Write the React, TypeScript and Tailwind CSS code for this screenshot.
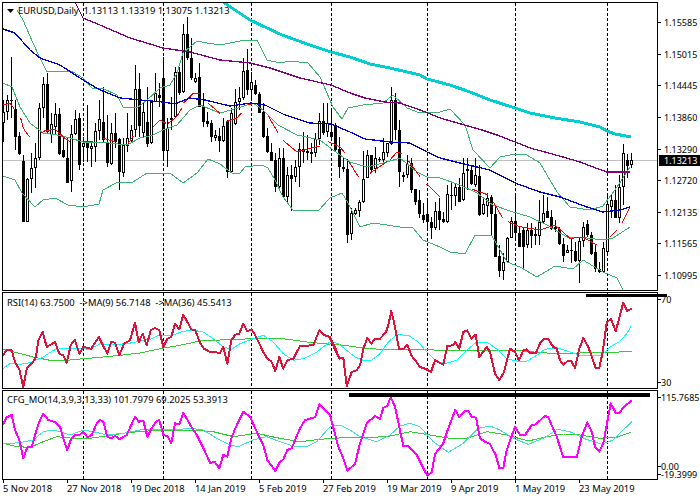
import React from "react";

type C = [number, number, number, number, number];
const conv = (y0: number, a: C[]) => a.map(([h, l, t, b, w]) => [y0 + h / 3, y0 + l / 3, y0 + t / 3, y0 + b / 3, w].map((v, i) => i < 4 ? Math.round(v) : v));
const z7: C[] = [[270,395,305,338,1],[255,330,270,305,1],[140,325,270,272,0],[270,420,298,380,0],[365,435,378,432,0],[435,637,453,635,0],[505,637,508,635,1],[430,550,475,508,1],[400,535,445,475,1],[280,450,295,445,1],[200,325,222,295,1],[190,370,222,365,0],[310,400,343,375,1],[280,375,312,350,1],[295,435,312,433,0],[380,445,420,442,0],[380,520,445,518,0],[345,545,372,512,1],[300,375,328,372,1],[310,480,323,465,0],[380,455,398,410,1],[285,455,398,415,0],[400,470,408,416,1],[340,455,363,410,1],[270,390,328,362,1],[230,395,337,390,0],[315,470,395,458,0],[340,465,370,462,1],[310,415,370,395,0],[385,540,388,485,0],[385,500,405,488,1],[310,425,385,408,1],[345,400,360,393,1],[165,380,238,360,1],[190,380,238,348,0],[275,385,305,368,1],[230,410,336,402,0],[270,402,275,400,1],[190,275,248,275,1],[220,290,255,263,0],[140,450,205,423,0],[325,472,355,423,1],[260,360,323,330,0],[170,325,187,322,1],[170,255,187,248,0],[42,250,72,245,1],[22,150,72,143,0],[85,210,143,203,0],[190,220,203,215,1],[160,285,202,290,0],[248,350,290,335,0],[305,352,333,342,0],[330,395,340,380,0],[360,392,375,385,1],[355,425,378,392,0]];
const z8: C[] = [[235,305,258,302,1],[240,415,243,395,0],[205,400,220,397,1],[148,255,185,252,1],[140,210,175,185,1],[55,180,92,175,1],[28,165,90,150,0],[95,175,126,150,1],[120,165,135,163,0],[155,220,162,218,0],[190,295,217,290,0],[265,340,288,335,0],[310,362,335,362,0],[340,455,360,440,0],[325,452,355,440,1],[323,472,355,470,0],[380,490,405,470,1],[375,512,405,417,0],[360,425,382,410,1],[310,440,328,382,1],[275,370,328,337,0],[285,360,333,340,0],[310,368,335,342,0],[280,350,297,338,1],[220,315,243,298,1],[190,285,243,278,0],[190,290,248,277,1],[210,300,275,290,0],[250,335,256,330,0],[290,415,327,382,0],[350,395,380,386,0],[358,610,387,585,0],[505,600,520,583,1],[505,525,510,523,1],[480,532,485,512,1],[332,490,418,485,1],[330,415,345,415,1],[345,400,345,390,0],[320,400,355,388,1],[350,365,358,361,0],[295,365,337,360,1],[310,350,310,340,1],[142,315,180,313,1],[160,300,180,270,0],[240,442,270,395,0],[395,425,405,412,1],[345,415,372,406,1],[355,460,370,450,0],[450,495,447,487,0],[450,535,480,523,0],[490,550,525,540,0],[480,565,522,547,0],[530,598,545,565,0],[485,570,513,565,1],[475,570,513,540,0]];
const z9: C[] = [[245,280,267,275,0],[165,280,192,275,1],[155,240,195,198,0],[160,228,172,197,1],[145,215,172,215,0],[85,212,130,210,1],[85,180,118,122,0],[105,165,120,162,0],[85,170,135,165,1],[105,258,138,255,0],[205,255,222,252,1],[190,260,203,227,1],[195,315,200,253,0],[225,380,252,380,0],[345,440,378,422,0],[370,450,397,422,1],[320,395,324,395,1],[260,325,273,325,1],[190,325,273,308,0],[290,350,308,350,0],[295,413,300,350,0],[280,355,300,345,1],[280,355,300,317,0],[290,345,313,317,0],[210,345,277,317,1],[195,280,250,277,1],[200,265,243,265,0],[240,300,260,297,0],[270,305,290,298,0],[290,345,298,343,0],[325,395,342,378,0],[345,370,360,368,1],[320,400,360,364,0],[335,395,362,392,0],[320,460,332,392,1],[275,350,290,332,1],[270,320,283,315,0],[305,375,315,372,0],[345,425,367,418,0],[395,430,418,427,0],[335,428,355,425,1],[195,368,222,367,1],[195,265,210,230,1],[165,265,210,265,0],[135,280,170,265,1],[43,225,68,170,1],[72,145,90,107,0],[70,115,90,105,1]];
const candles = [...conv(10, z7), ...conv(40, z8), ...conv(130, z9)];

const P = (x0: number, y0: number, a: number[]) => {
  let s = "";
  for (let i = 0; i < a.length; i += 2) s += `${(x0 + a[i] / 3).toFixed(1)},${(y0 + a[i + 1] / 3).toFixed(1)} `;
  return s;
};
const R = (a: number[]) => {
  let s = "";
  for (let i = 0; i < a.length; i += 2) s += `${a[i]},${a[i + 1]} `;
  return s;
};

const dashes = [83, 163, 251, 331, 427, 515, 607];
const Line = ({ p, c, w = 1 }: { p: string; c: string; w?: number }) => (
  <polyline points={p} fill="none" stroke={c} strokeWidth={w} strokeLinejoin="round" shapeRendering="crispEdges" />
);
const Dashes = ({ y1, y2 }: { y1: number; y2: number }) => (
  <>
    {dashes.map((x) => (
      <line key={x} x1={x + 0.5} x2={x + 0.5} y1={y1} y2={y2} stroke="#000" strokeDasharray="3 2" shapeRendering="crispEdges" />
    ))}
  </>
);

const upper = R([17,10,23,20,33,43,40,58,47,72,60,71,73,72,83,78,92,88,102,88,117,95,123,107,137,108,147,100,160,88,170,85,177,73,183,53,197,41,207,43,220,45,240,41,257,40,267,60,280,63,290,61,308,63,320,77,333,107,342,119,348,108,363,105,383,103,393,95,407,108,420,113,440,112,450,109,465,125,473,150,490,168,500,157,515,154,527,155,540,163,557,192,570,207,590,210,603,206,617,187,630,167]);
const mid = R([3,83,12,87,20,107,30,123,43,133,57,135,70,138,83,142,100,142,127,145,140,138,153,135,163,130,177,125,190,110,200,105,220,113,238,108,253,103,263,110,278,125,297,135,320,140,333,150,350,162,367,167,387,162,400,158,417,172,427,177,440,178,460,185,477,193,493,205,510,211,530,217,547,225,567,237,587,238,603,240,613,238,630,227]);
const lower = R([3,176,15,180,22,193,35,207,43,200,55,198,68,205,83,207,99,204,103,190,118,182,133,182,147,173,170,173,183,183,197,173,208,159,220,164,232,173,240,173,245,167,262,165,268,168,275,180,283,197,293,210,318,211,330,198,342,193,348,203,360,227,373,223,400,227,413,228,423,240,440,247,450,252,465,254,475,235,492,236,507,262,520,267,537,277,555,266,573,269,583,260,603,272,617,278,623,290]);
const purple = R([75,2,83,18,100,25,130,38,150,44,163,48,190,52,220,60,250,63,270,68,300,78,331,85,350,93,365,98,385,102,400,103,420,110,440,118,482,130,497,135,515,142,530,148,545,152,563,157,580,162,593,167,607,172,630,172]);
const blue = R([3,29,15,33,30,50,40,58,60,65,83,80,100,90,120,98,140,100,163,102,175,104,190,98,205,100,230,106,251,103,265,105,285,115,310,123,331,124,350,132,365,139,390,142,410,143,427,152,440,158,460,163,490,170,515,183,540,192,560,197,587,207,603,212,620,210,630,207]);
const teal = R([223,2,250,20,282,35,310,45,331,52,350,57,370,64,390,68,420,75,427,79,450,85,470,92,490,100,515,108,530,113,555,118,580,122,600,127,607,131,615,134,631,137]);
const reds = [
  P(0,10,[10,285,30,280,45,300]),P(0,10,[62,325,70,355,88,380]),P(0,10,[122,370,135,362,165,358,195,385,210,395]),P(0,10,[250,395,280,395]),P(0,10,[310,385,345,395]),P(0,10,[385,400,400,378]),P(0,10,[460,350,480,330,498,340]),P(0,10,[505,340,530,320,545,295]),P(0,10,[550,280,580,250,600,250]),P(0,10,[625,280,660,310]),
  P(220,40,[18,245,50,235,65,218]),P(220,40,[85,195,105,190]),P(220,40,[145,228,175,280]),P(220,40,[188,300,230,335,300,318]),P(220,40,[325,305,360,320,375,340]),P(220,40,[385,362,415,410]),P(220,40,[450,400,500,365]),P(220,40,[510,360,530,337,545,340]),P(220,40,[565,362,600,410]),P(220,40,[620,432,660,470]),
  P(440,130,[95,177,145,195]),P(440,130,[160,215,188,265]),P(440,130,[205,275,240,290,300,300,345,285,390,325,430,322,470,345]),P(440,130,[510,322,532,300]),P(440,130,[545,280,570,230]),
];

const rsi1 = P(0,292,[8,190,20,175,35,175,45,210,58,232,70,285,80,230,95,215,108,195,115,145,128,120,140,165,165,150,178,185,190,190,200,212,212,160,224,143,238,185,250,165,274,170,296,135,322,185,334,150,345,152,358,190,372,155,390,145,405,92,416,150,428,125,440,160,452,115,465,108,478,115,490,165,502,140,514,135,525,95,538,112,550,68,574,112,586,115,600,152,612,170,630,180,660,182,670,165,682,215,694,145,706,128,718,125,730,95,742,118,754,112,766,130,790,180,802,200,814,208,826,237,838,195,850,230,862,205,880,200,900,162,940,160,958,115,970,128,990,135,1005,165,1018,200]);
const rsi2 = P(330,292,[0,140,15,165,27,197,40,197,50,282,65,240,80,235,90,220,100,170,112,138,124,155,135,140,150,140,168,120,175,100,184,57,192,90,207,170,220,172,232,158,245,192,258,208,270,225,285,230,303,240,315,205,340,218,352,162,368,160,376,150,388,170,400,120,412,115,424,140,437,128,448,195,470,165,480,180,495,245,508,265,522,240,540,170,555,180,567,205,580,175,590,172,600,182,618,182,632,150,642,140,655,142,670,165,680,170,690,205,700,218,712,208,724,208,735,228,748,170,760,138,775,165,797,228,808,228,818,180,830,92,843,80,857,118,880,32,892,57,905,50]);
const rsiC = P(0,292,[8,230,30,215,60,217,90,212,130,195,160,175,180,170,220,168,270,172,300,155,340,158,380,155,420,148,450,142,480,128,510,132,550,118,580,115,610,120,640,140,670,165,695,172,720,155,760,140,790,130,820,150,850,185,880,205,910,200,950,180,990,150]) + P(330,292,[0,148,25,155,50,175,75,195,100,205,125,205,150,185,175,150,200,128,235,130,265,150,290,180,315,205,345,215,380,205,410,175,440,150,470,150,500,170,530,200,560,207,590,208,620,190,645,172,680,167,720,180,750,190,790,192,815,190,840,165,870,148,890,125,903,103]);
const rsiG = P(0,292,[8,172,50,182,100,195,150,205,200,205,250,200,300,196,360,190,420,183,480,170,540,160,600,147,680,143,760,140,850,140,920,150,990,157]) + P(330,292,[0,155,40,160,100,168,150,172,250,172,340,175,450,175,550,175,650,183,750,183,850,181,905,178]);

const cfgM = P(0,340,[8,255,20,232,35,225,45,270,58,300,70,355,82,322,95,322,108,275,120,240,130,222,145,240,165,247,180,260,190,295,202,330,212,300,224,285,238,285,250,275,262,292,275,285,290,250,300,240,310,245,322,290,334,295,345,287,358,298,380,285,405,230,416,245,430,242,442,290,455,265,470,243,478,240,490,285,502,288,514,310,525,250,538,253,550,218,574,260,590,285,615,335,630,368,645,367,658,385,670,345,682,350,694,295,706,265,730,215,750,230,770,275,790,315,802,360,826,393,838,368,850,358,862,330,875,325,900,265,915,240,945,232,958,193,990,225,1015,320,1030,355,1042,392]) + P(350,340,[0,385,15,372,30,310,50,250,75,228,90,237,100,203,112,198,122,172,135,200,160,318,175,318,200,345,215,375,232,407,245,397,255,342,280,310,295,265,316,210,328,232,345,212,355,212,365,230,378,233,390,295,405,305,420,312,437,345,448,384,460,384,470,330,495,260,510,285,525,285,545,255,558,253,585,227,595,232,620,290,640,352,670,350,680,352,695,290,712,247,725,275,735,320,748,335,760,310,782,190,797,218,808,218,825,197,845,182]);
const cfgC = P(0,340,[8,312,30,310,60,308,100,300,130,275,160,270,190,278,210,285,250,270,280,275,320,285,370,280,420,270,470,268,520,270,570,265,610,270,650,295,690,315,715,320,760,300,800,290,840,305,880,318,920,320,950,305,990,260,1020,255]) + P(350,340,[0,270,30,290,80,305,120,285,150,258,180,250,210,260,250,305,295,337,340,310,385,265,420,258,450,270,490,295,535,313,590,290,620,268,660,275,700,295,755,313,790,300,820,270,845,245]);
const cfgG = P(0,340,[8,310,50,320,90,322,130,305,170,290,220,295,270,295,320,288,380,278,480,270,570,270,640,275,700,290,770,280,830,293,900,305,960,298]) + P(350,340,[0,292,60,292,110,290,180,275,240,285,300,295,350,295,410,275,470,285,535,303,590,290,640,282,690,285,750,295,800,292,843,277]);

const prices = ["1.15585", "1.15015", "1.14445", "1.13860", "1.13290", "1.12720", "1.12135", "1.11565", "1.10995"];
const dates = ["5 Nov 2018", "27 Nov 2018", "19 Dec 2018", "14 Jan 2019", "5 Feb 2019", "27 Feb 2019", "19 Mar 2019", "9 Apr 2019", "1 May 2019", "23 May 2019"];

const Tick = () => <span className="block w-[3px] h-px bg-black shrink-0" />;

export default function App() {
  return (
    <div className="relative w-[700px] h-[500px] bg-white overflow-hidden pt-[2px] pl-[2px] text-black text-[9px] leading-none font-['Noto_Sans','Liberation_Sans',sans-serif]">
      <div className="flex h-[289px]">
        <div className="relative w-[656px] h-[289px] border border-black">
          <svg width="654" height="287" viewBox="3 3 654 287" className="block">
            <line x1="3" x2="657" y1="160.5" y2="160.5" stroke="#c0c0c0" shapeRendering="crispEdges" />
            <Dashes y1={3} y2={290} />
            <g shapeRendering="crispEdges">
              {candles.map((c, i) => {
                const x = 3 + 4 * i;
                const [h, l, t, b, w] = c;
                return (
                  <g key={i}>
                    <rect x={x} y={h} width={1} height={Math.max(1, l - h)} fill="#000" />
                    <rect x={x - 1} y={t} width={3} height={Math.max(1, b - t)} fill="#000" />
                    {w === 1 && b - t > 2 && <rect x={x} y={t + 1} width={1} height={b - t - 2} fill="#fff" />}
                  </g>
                );
              })}
            </g>
            <Line p={upper} c="#3cb371" />
            <Line p={mid} c="#3cb371" />
            <Line p={lower} c="#3cb371" />
            {reds.map((r, i) => <Line key={i} p={r} c="#ff0000" />)}
            <Line p={purple} c="#800080" w={1.3} />
            <Line p={blue} c="#0000cd" w={1.3} />
            <Line p={teal} c="#00ced1" w={3} />
          </svg>
          <div className="absolute left-[4px] top-[3px] flex items-center gap-[4px] whitespace-pre">
            <svg width="7" height="4" viewBox="0 0 7 4"><path d="M0 0h7L3.500 4z" fill="#000" /></svg>
            <span className="text-[9.400px]">EURUSD,Daily  1.13113 1.13319 1.13075 1.13213</span>
          </div>
        </div>
        <div className="w-[42px] pt-[5px] flex flex-col">
          {prices.map((p) => (
            <div key={p} className="h-[33px] flex items-center gap-[3px]">
              <Tick />
              <span>{p}</span>
            </div>
          ))}
        </div>
      </div>

      <div className="flex h-[97px] mt-px">
        <div className="relative w-[656px] h-[97px] border border-black">
          <svg width="654" height="95" viewBox="3 293 654 95" className="block">
            <Dashes y1={293} y2={388} />
            <Line p={rsiG} c="#32cd32" />
            <Line p={rsiC} c="#00ffff" />
            <Line p={rsi1 + rsi2} c="#dc143c" w={2} />
          </svg>
          <div className="absolute left-[4px] top-[5px] whitespace-pre text-[9.400px]">RSI(14) 63.7500  -&gt;MA(9) 56.7148  -&gt;MA(36) 45.5413</div>
        </div>
        <div className="w-[42px] flex flex-col justify-between pt-px pb-px">
          <div className="h-[12px] flex items-center"><Tick /><span>70</span></div>
          <div className="h-[12px] flex items-center"><Tick /><span>30</span></div>
        </div>
      </div>

      <div className="flex h-[90px] mt-px">
        <div className="relative w-[656px] h-[90px] border border-black">
          <svg width="654" height="88" viewBox="3 391 654 88" className="block">
            <Dashes y1={391} y2={479} />
            <Line p={cfgG} c="#32cd32" />
            <Line p={cfgC} c="#40e0d0" />
            <Line p={cfgM} c="#ff00ff" w={2} />
          </svg>
          <div className="absolute left-[4px] top-[4px] whitespace-pre text-[9.400px]">CFG_MO(14,3,9,3,13,33) 101.7979 69.2025 53.3913</div>
        </div>
        <div className="w-[42px] flex flex-col pt-px">
          <div className="h-[12px] flex items-center"><Tick /><span>115.7685</span></div>
          <div className="h-[12px] flex items-center mt-[57px]"><Tick /><span>0.00</span></div>
          <div className="h-[8px] flex items-center -mt-[2px]"><Tick /><span>-19.3999</span></div>
        </div>
      </div>

      <div className="flex pl-px">
        {dates.map((d) => (
          <div key={d} className="w-16 shrink-0">
            <span className="block w-px h-[3px] bg-black" />
            <span className="block mt-px whitespace-pre text-[9.400px]">{d}</span>
          </div>
        ))}
      </div>

      <div className="absolute left-[586px] top-[294px] w-[81px] h-[3px] bg-black" />
      <div className="absolute left-[349px] top-[393px] w-[301px] h-[4px] bg-black" />
      <div className="absolute left-[659px] top-[155px] w-[41px] h-[11px] bg-black text-white pl-[5px] flex items-center">1.13213</div>
    </div>
  );
}
